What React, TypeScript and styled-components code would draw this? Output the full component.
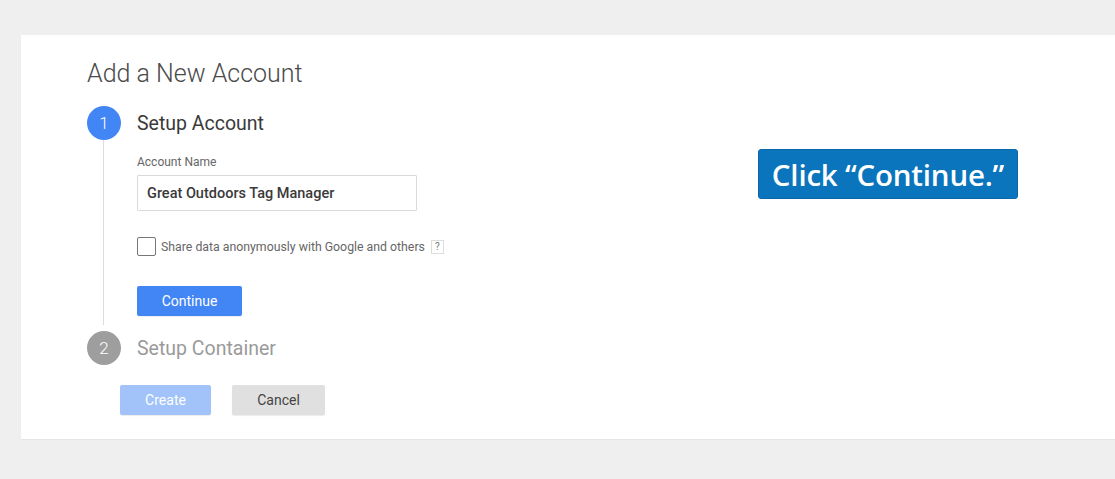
import React from 'react';
import styled, { createGlobalStyle } from 'styled-components';

const GlobalStyle = createGlobalStyle`
  html, body { margin: 0; padding: 0; background: #efefef; }
  body { font-family: Roboto, "Liberation Sans", Arial, sans-serif; }
  * { box-sizing: border-box; }
`;

// --- Page layout ---
const Page = styled.div`
  width: 1115px; height: 479px; padding: 35px 0 0 21px; overflow: hidden;
`;
const Card = styled.div`
  display: flex; background: #fff; height: 404px; width: 1110px;
  padding: 0 0 0 66px; box-shadow: 0 1px 1px rgba(0,0,0,0.04);
`;
const Main = styled.div` width: 671px; `;
const Side = styled.div` padding-top: 114px; `;

const Title = styled.h1`
  margin: 25px 0 0; font-size: 25px; line-height: 28px; font-weight: 300; color: #4a4a4a;
`;

// --- Steps ---
const StepHead = styled.div<{ $top: number }>`
  display: flex; align-items: center; gap: 16px; margin-top: ${p => p.$top}px;
`;
const StepNum = styled.div<{ $active?: boolean }>`
  width: 34px; height: 34px; border-radius: 50%; display: flex; align-items: center; justify-content: center;
  background: ${p => (p.$active ? '#4285f4' : '#9e9e9e')}; color: #fff; font-size: 17px; font-weight: 300;
`;
const StepTitle = styled.div<{ $active?: boolean }>`
  font-size: 19.5px; font-weight: 400; color: ${p => (p.$active ? '#3a3a3a' : '#9a9a9a')};
`;
const StepBody = styled.div`
  margin-left: 16px; border-left: 1px solid #dcdcdc; padding: 14px 0 9px 33px;
`;

const Label = styled.div` font-size: 12px; color: #666; line-height: 16px; `;
const TextInput = styled.div`
  margin-top: 5px; width: 280px; height: 36px; border: 1px solid #d9d9d9; border-radius: 1px;
  padding: 0 9px; display: flex; align-items: center; font-size: 14.5px; font-weight: 500; color: #3a3a3a;
`;
const CheckRow = styled.label`
  display: flex; align-items: center; margin-top: 26px; font-size: 12.3px; color: #666;
`;
const Box = styled.span`
  width: 19px; height: 19px; border: 1px solid #777; border-radius: 2px; margin-right: 5px; flex: none;
`;
const Help = styled.span`
  margin-left: 6px; width: 13px; height: 14px; border: 1px solid #ddd; font-size: 10px; color: #777;
  display: inline-flex; align-items: center; justify-content: center;
`;

const Button = styled.button<{ $kind: 'primary' | 'disabled' | 'plain'; $w: number }>`
  width: ${p => p.$w}px; height: 30px; border: none; border-radius: 2px; font-family: inherit; font-size: 14px;
  background: ${p => (p.$kind === 'primary' ? '#4285f4' : p.$kind === 'disabled' ? '#a1c3fa' : '#e0e0e0')};
  color: ${p => (p.$kind === 'plain' ? '#444' : '#fff')};
  box-shadow: 0 1px 1px rgba(0,0,0,0.08);
`;
const ContinueWrap = styled.div` margin-top: 30px; `;
const Actions = styled.div` display: flex; gap: 21px; margin: 20px 0 0 33px; `;

// --- Callout ---
const Callout = styled.div`
  width: 260px; height: 50px; background: #0a74bc; border-radius: 3px; border: 1px solid #0767a8;
  color: #fff; font-family: "Open Sans", sans-serif; font-weight: 600; font-size: 29.5px;
  display: flex; align-items: center; justify-content: center; letter-spacing: -0.2px;
`;

export default function App() {
  return (
    <Page>
      <GlobalStyle />
      <Card>
        <Main>
          <Title>Add a New Account</Title>
          <StepHead $top={18}>
            <StepNum $active>1</StepNum>
            <StepTitle $active>Setup Account</StepTitle>
          </StepHead>
          <StepBody>
            <Label>Account Name</Label>
            <TextInput>Great Outdoors Tag Manager</TextInput>
            <CheckRow>
              <Box />
              Share data anonymously with Google and others
              <Help>?</Help>
            </CheckRow>
            <ContinueWrap>
              <Button $kind="primary" $w={105}>Continue</Button>
            </ContinueWrap>
          </StepBody>
          <StepHead $top={6}>
            <StepNum>2</StepNum>
            <StepTitle>Setup Container</StepTitle>
          </StepHead>
          <Actions>
            <Button $kind="disabled" $w={91}>Create</Button>
            <Button $kind="plain" $w={93}>Cancel</Button>
          </Actions>
        </Main>
        <Side>
          <Callout>Click “Continue.”</Callout>
        </Side>
      </Card>
    </Page>
  );
}
